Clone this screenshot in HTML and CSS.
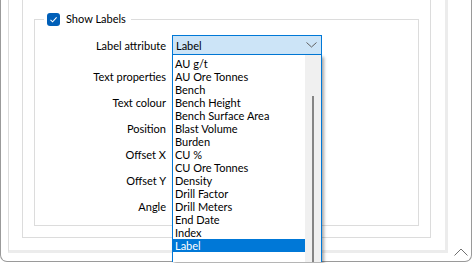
FILE: index.html
```html
<!DOCTYPE html>
<html lang="en">
<head>
    <meta charset="UTF-8">
    <title>Label settings</title>
    <link rel="stylesheet" href="styles.css">
</head>
<body>
    <div class="window">
        <div class="panel">
            <div class="frame">
                <fieldset class="group">
                    <legend>
                        <span class="check">
                            <svg width="13" height="13" viewBox="0 0 13 13"><path d="M3.5 6.8 L5.6 8.8 L9.6 4.4" fill="none" stroke="#fff" stroke-width="1.1"/></svg>
                        </span>
                        Show Labels
                    </legend>

                    <div class="form">
                        <div class="row first">
                            <label>Label attribute</label>
                            <div class="combo-cell">
                                <div class="combo">
                                    <span>Label</span>
                                    <svg width="11" height="6" viewBox="0 0 11 6"><path d="M0.5 0.5 L5.5 5 L10.5 0.5" fill="none" stroke="#606060" stroke-width="1"/></svg>
                                </div>
                                <div class="droplist">
                                    <ul class="items">
                                        <li>AU g/t</li>
                                        <li>AU Ore Tonnes</li>
                                        <li>Bench</li>
                                        <li>Bench Height</li>
                                        <li>Bench Surface Area</li>
                                        <li>Blast Volume</li>
                                        <li>Burden</li>
                                        <li>CU %</li>
                                        <li>CU Ore Tonnes</li>
                                        <li>Density</li>
                                        <li>Drill Factor</li>
                                        <li>Drill Meters</li>
                                        <li>End Date</li>
                                        <li>Index</li>
                                        <li class="selected">Label</li>
                                    </ul>
                                    <div class="scrollbar"><div class="thumb"></div></div>
                                </div>
                            </div>
                        </div>
                        <div class="row"><label>Text properties</label></div>
                        <div class="row"><label>Text colour</label></div>
                        <div class="row"><label>Position</label></div>
                        <div class="row"><label>Offset X</label></div>
                        <div class="row"><label>Offset Y</label></div>
                        <div class="row"><label>Angle</label></div>
                    </div>
                </fieldset>
            </div>
        </div>
        <div class="collapse">
            <svg width="14" height="8" viewBox="0 0 14 8"><path d="M0.5 7.5 L7 1 L13.5 7.5" fill="none" stroke="#707070" stroke-width="1"/></svg>
        </div>
    </div>
</body>
</html>
```

FILE: styles.css
```css
* {
    margin: 0;
    padding: 0;
    box-sizing: border-box;
}

body {
    font-family: 'Lato', 'Noto Sans', sans-serif;
    font-size: 11px;
    color: #000;
    background: #fff;
    width: 472px;
    height: 263px;
    overflow: hidden;
}

/* Outer window */
.window {
    position: relative;
    width: 472px;
    height: 262px;
    border: 1px solid #9a9a9a;
    border-top: none;
    border-radius: 0 0 7px 7px;
    padding: 0 23px 8px 7px;
    display: flex;
}

.panel {
    flex: 1;
    border-left: 1px solid #dcdcdc;
    border-right: 3px solid #ececec;
    border-bottom: 3px solid #ececec;
    padding: 0 14px 12px 13px;
    display: flex;
}

.frame {
    flex: 1;
    border: 1px solid #dcdcdc;
    border-top: none;
    padding: 12px 11px 11px 11px;
    display: flex;
}

/* Group box */
.group {
    flex: 1;
    border: 1px solid #dcdcdc;
    padding: 0;
    min-width: 0;
}

.group legend {
    margin-left: 9px;
    padding: 0 5px 0 3px;
    display: flex;
    align-items: center;
    gap: 6px;
    line-height: 14px;
}

.check {
    width: 13px;
    height: 13px;
    border-radius: 3px;
    background: #005fb8;
    display: flex;
}

/* Form rows */
.form {
    display: flex;
    flex-direction: column;
    gap: 4px;
    padding-top: 9px;
}

.row {
    display: flex;
    align-items: center;
    gap: 6px;
    height: 22px;
}

.row label {
    width: 131px;
    text-align: right;
    white-space: nowrap;
}

.row.first {
    height: 20px;
    margin-bottom: 6px;
}

.combo-cell {
    position: relative;
    width: 150px;
}

.combo {
    height: 20px;
    border: 1px solid #0078d7;
    background: #cce4f7;
    display: flex;
    align-items: center;
    justify-content: space-between;
    padding: 0 4px 0 3px;
}

/* Open dropdown list */
.droplist {
    position: absolute;
    top: 20px;
    left: 0;
    width: 150px;
    height: 207px;
    background: #fff;
    border: 1px solid #0078d7;
    border-top: none;
    border-bottom: none;
    box-shadow: 2px 2px 3px rgba(0, 0, 0, 0.35);
    display: flex;
    z-index: 10;
}

.items {
    list-style: none;
    flex: 1;
    padding-top: 2px;
}

.items li {
    height: 13px;
    line-height: 13px;
    padding-left: 2px;
    white-space: nowrap;
}

.items li.selected {
    background: #0078d7;
    color: #fff;
}

.scrollbar {
    width: 16px;
    background: #f0f0f0;
    position: relative;
}

.thumb {
    position: absolute;
    left: 7px;
    top: 41px;
    width: 2px;
    height: 166px;
    background: #858585;
}

.collapse {
    position: absolute;
    right: 3px;
    bottom: 5px;
    display: flex;
}
```
